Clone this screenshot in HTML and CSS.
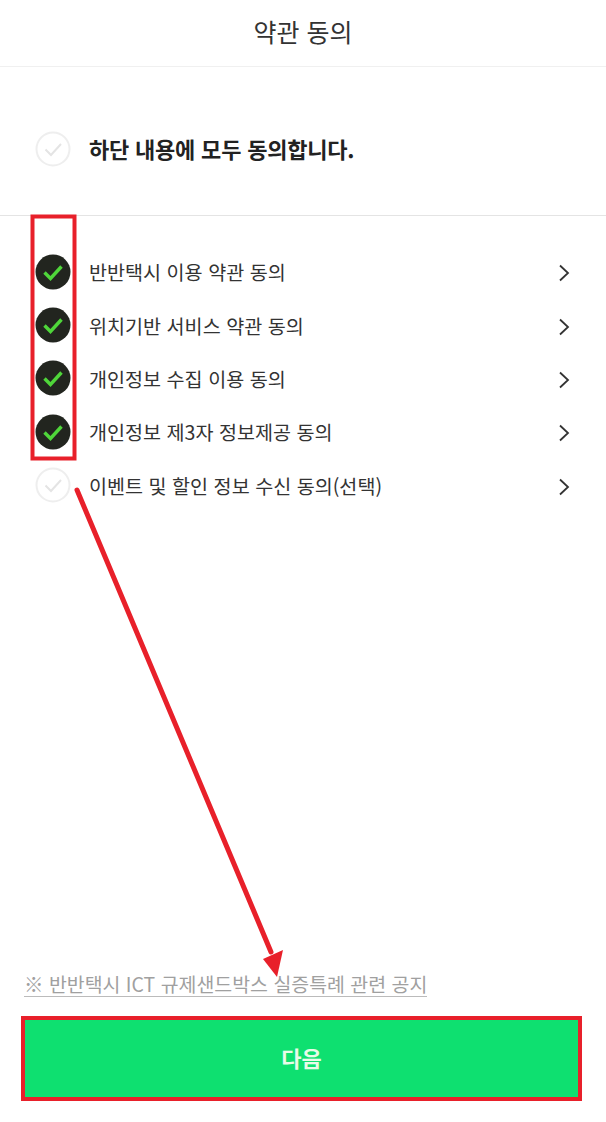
FILE: index.html
```html
<!DOCTYPE html>
<html lang="ko">
<head>
<meta charset="utf-8">
<title>약관 동의</title>
<link rel="stylesheet" href="styles.css">
</head>
<body>
<div class="screen">
  <header class="header">약관 동의</header>
  <section class="all-row">
    <svg class="check" viewBox="0 0 36 36"><circle cx="18" cy="18" r="16.5" fill="#fff" stroke="#eeeeee" stroke-width="2"/><path d="M10.5 18.5l5.5 5.5 10-11" fill="none" stroke="#e4e4e4" stroke-width="2"/></svg>
    <span class="all-label">하단 내용에 모두 동의합니다.</span>
  </section>
  <ul class="terms">
    <li class="term"><svg class="check" viewBox="0 0 36 36"><circle cx="18" cy="18" r="17.5" fill="#22251f"/><path d="M9.5 18.5l6 6 11-12" fill="none" stroke="#4fd63a" stroke-width="3.4"/></svg><span class="term-label">반반택시 이용 약관 동의</span><svg class="chev" viewBox="0 0 12 18"><path d="M2 1.5l8 7.5-8 7.5" fill="none" stroke="#333" stroke-width="1.8"/></svg></li>
    <li class="term"><svg class="check" viewBox="0 0 36 36"><circle cx="18" cy="18" r="17.5" fill="#22251f"/><path d="M9.5 18.5l6 6 11-12" fill="none" stroke="#4fd63a" stroke-width="3.4"/></svg><span class="term-label">위치기반 서비스 약관 동의</span><svg class="chev" viewBox="0 0 12 18"><path d="M2 1.5l8 7.5-8 7.5" fill="none" stroke="#333" stroke-width="1.8"/></svg></li>
    <li class="term"><svg class="check" viewBox="0 0 36 36"><circle cx="18" cy="18" r="17.5" fill="#22251f"/><path d="M9.5 18.5l6 6 11-12" fill="none" stroke="#4fd63a" stroke-width="3.4"/></svg><span class="term-label">개인정보 수집 이용 동의</span><svg class="chev" viewBox="0 0 12 18"><path d="M2 1.5l8 7.5-8 7.5" fill="none" stroke="#333" stroke-width="1.8"/></svg></li>
    <li class="term"><svg class="check" viewBox="0 0 36 36"><circle cx="18" cy="18" r="17.5" fill="#22251f"/><path d="M9.5 18.5l6 6 11-12" fill="none" stroke="#4fd63a" stroke-width="3.4"/></svg><span class="term-label">개인정보 제3자 정보제공 동의</span><svg class="chev" viewBox="0 0 12 18"><path d="M2 1.5l8 7.5-8 7.5" fill="none" stroke="#333" stroke-width="1.8"/></svg></li>
    <li class="term"><svg class="check" viewBox="0 0 36 36"><circle cx="18" cy="18" r="16.5" fill="#fff" stroke="#eeeeee" stroke-width="2"/><path d="M10.5 18.5l5.5 5.5 10-11" fill="none" stroke="#e4e4e4" stroke-width="2"/></svg><span class="term-label">이벤트 및 할인 정보 수신 동의(선택)</span><svg class="chev" viewBox="0 0 12 18"><path d="M2 1.5l8 7.5-8 7.5" fill="none" stroke="#333" stroke-width="1.8"/></svg></li>
  </ul>
  <footer class="footer">
    <a class="notice">※ 반반택시 ICT 규제샌드박스 실증특례 관련 공지</a>
    <button class="next">다음</button>
  </footer>
  <svg class="annotation" viewBox="0 0 606 1122">
    <rect x="32.5" y="216.5" width="42" height="242" fill="none" stroke="#e8202a" stroke-width="4"/>
    <path d="M77 490L271 952" fill="none" stroke="#e8202a" stroke-width="5" stroke-linecap="round"/>
    <path d="M263 959L283 950L277 977Z" fill="#e8202a"/>
  </svg>
</div>
</body>
</html>
```
FILE: styles.css
```css
* { box-sizing: border-box; }
html, body { margin: 0; padding: 0; }
body {
  background: #fff;
  font-family: "Noto Sans CJK KR", "Noto Sans", sans-serif;
  color: #333;
}
.screen {
  position: relative;
  width: 606px;
  height: 1122px;
  display: flex;
  flex-direction: column;
  overflow: hidden;
}
.header {
  height: 67px;
  border-bottom: 1px solid #f0f0f0;
  display: flex;
  align-items: center;
  justify-content: center;
  font-size: 25px;
  color: #333;
  padding-bottom: 4px;
}
.all-row {
  height: 149px;
  border-bottom: 1px solid #e4e4e4;
  display: flex;
  align-items: center;
  gap: 18px;
  padding: 15px 0 0 35px;
}
.check { width: 36px; height: 36px; flex: none; }
.all-label { font-size: 22px; font-weight: 700; color: #222; letter-spacing: -0.2px; margin-bottom: 2px; }
.terms {
  list-style: none;
  margin: 0;
  padding: 29px 36px 0 35px;
  flex: 1;
}
.term {
  height: 53.4px;
  display: flex;
  align-items: center;
  gap: 18px;
}
.term-label { flex: 1; font-size: 19.6px; color: #333; }
.chev { width: 12px; height: 18px; flex: none; margin-top: 3px; }
.footer {
  display: flex;
  flex-direction: column;
  align-items: flex-start;
  padding: 0 24px 21px;
}
.notice {
  font-size: 19.45px;
  line-height: 25px;
  color: #a0a0a0;
  border-bottom: 1px solid #bbb;
  margin-bottom: 19px;
}
.next {
  width: 561px;
  height: 85px;
  margin-left: -3px;
  padding: 0 0 4px;
  border: 4px solid #e8202a;
  background: #0ee070;
  color: #e8fbe8;
  font: 700 22px "Noto Sans CJK KR", sans-serif;
}
.annotation {
  position: absolute;
  inset: 0;
  width: 606px;
  height: 1122px;
  pointer-events: none;
}
```
